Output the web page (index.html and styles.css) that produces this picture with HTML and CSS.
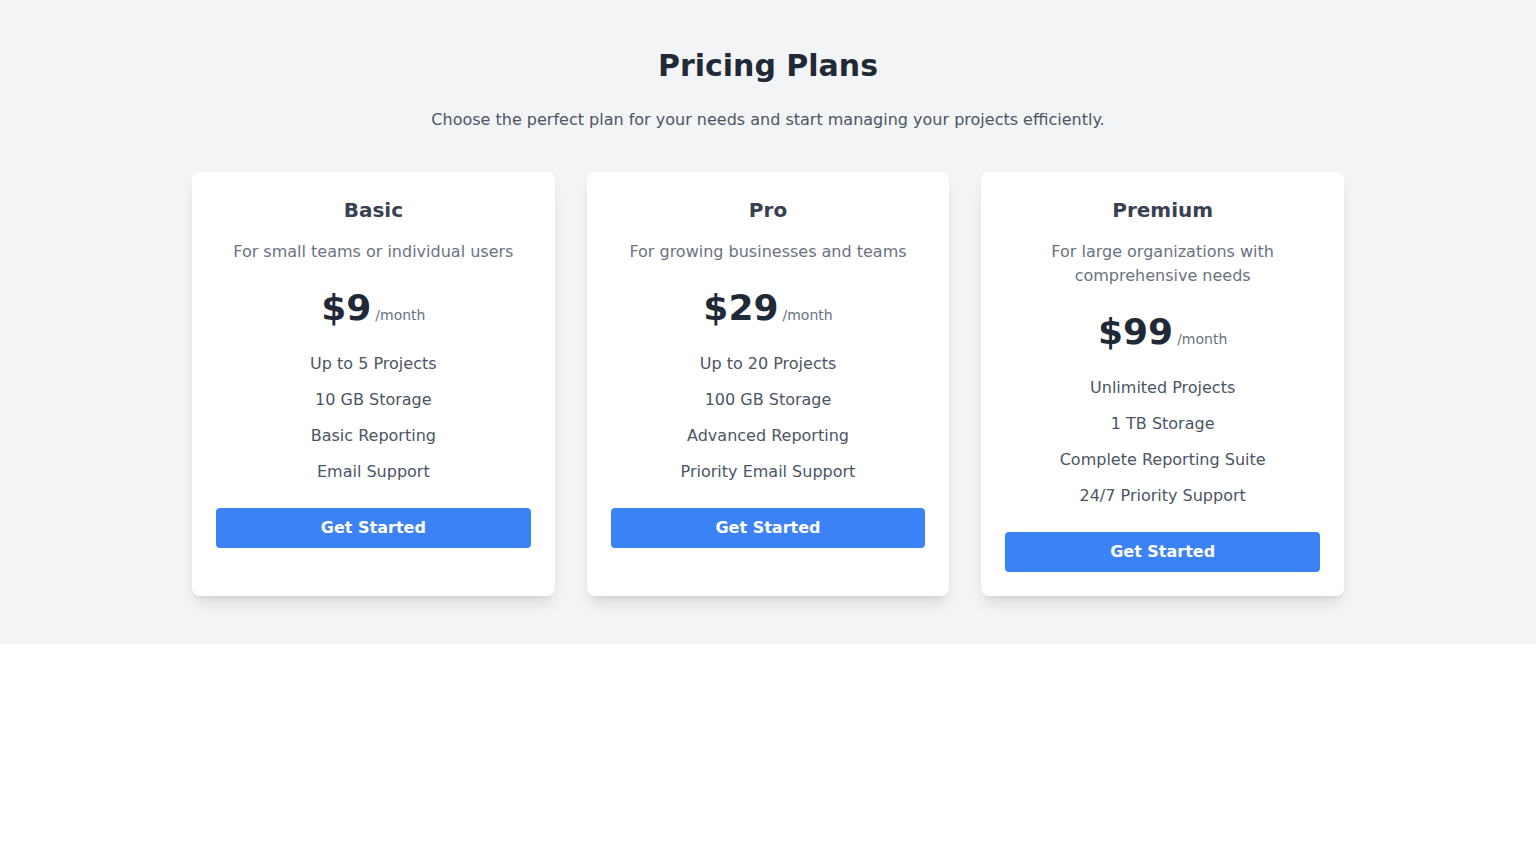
FILE: index.html
```html
<!DOCTYPE html>
<html lang="en">
<head>
<meta charset="utf-8">
<title>Pricing Plans</title>
<link rel="stylesheet" href="styles.css">
</head>
<body>
<section class="pricing">
  <div class="container">
    <h2 class="title">Pricing Plans</h2>
    <p class="subtitle">Choose the perfect plan for your needs and start managing your projects efficiently.</p>
    <div class="grid">
      <div class="card">
        <h3 class="plan-name">Basic</h3>
        <p class="plan-desc">For small teams or individual users</p>
        <div class="price"><span class="amount">$9</span><span class="period">/month</span></div>
        <ul class="features">
          <li>Up to 5 Projects</li>
          <li>10 GB Storage</li>
          <li>Basic Reporting</li>
          <li>Email Support</li>
        </ul>
        <button class="btn">Get Started</button>
      </div>
      <div class="card">
        <h3 class="plan-name">Pro</h3>
        <p class="plan-desc">For growing businesses and teams</p>
        <div class="price"><span class="amount">$29</span><span class="period">/month</span></div>
        <ul class="features">
          <li>Up to 20 Projects</li>
          <li>100 GB Storage</li>
          <li>Advanced Reporting</li>
          <li>Priority Email Support</li>
        </ul>
        <button class="btn">Get Started</button>
      </div>
      <div class="card">
        <h3 class="plan-name">Premium</h3>
        <p class="plan-desc">For large organizations with comprehensive needs</p>
        <div class="price"><span class="amount">$99</span><span class="period">/month</span></div>
        <ul class="features">
          <li>Unlimited Projects</li>
          <li>1 TB Storage</li>
          <li>Complete Reporting Suite</li>
          <li>24/7 Priority Support</li>
        </ul>
        <button class="btn">Get Started</button>
      </div>
    </div>
  </div>
</section>
</body>
</html>
```
FILE: styles.css
```css
* { box-sizing: border-box; }
html, body { margin: 0; padding: 0; }
body {
  font-family: "DejaVu Sans", sans-serif;
  background: #ffffff;
  color: #1f2937;
}
.pricing {
  background: #f3f4f6;
  padding: 48px 0;
}
.container {
  max-width: 1152px;
  margin: 0 auto;
  text-align: center;
}
.title {
  margin: 0 0 24px;
  font-size: 30px;
  line-height: 36px;
  font-weight: 700;
  color: #1f2937;
}
.subtitle {
  margin: 0 0 40px;
  font-size: 16px;
  line-height: 24px;
  color: #4b5563;
}
.grid {
  display: grid;
  grid-template-columns: repeat(3, 1fr);
  gap: 32px;
}
.card {
  background: #ffffff;
  border-radius: 8px;
  padding: 24px;
  box-shadow: 0 10px 15px -3px rgba(0,0,0,0.1), 0 4px 6px -4px rgba(0,0,0,0.1);
}
.plan-name {
  margin: 0 0 16px;
  font-size: 20px;
  line-height: 28px;
  font-weight: 700;
  color: #374151;
}
.plan-desc {
  margin: 0 0 24px;
  font-size: 16px;
  line-height: 24px;
  color: #6b7280;
}
.price {
  margin: 0 0 24px;
  display: flex;
  justify-content: center;
  align-items: baseline;
}
.amount {
  font-size: 36px;
  line-height: 40px;
  font-weight: 700;
  color: #1f2937;
}
.period {
  margin-left: 4px;
  font-size: 14px;
  line-height: 20px;
  color: #6b7280;
}
.features {
  list-style: none;
  margin: 0 0 24px;
  padding: 0;
  display: flex;
  flex-direction: column;
  gap: 12px;
}
.features li {
  font-size: 16px;
  line-height: 24px;
  color: #4b5563;
}
.btn {
  display: block;
  width: 100%;
  border: 0;
  border-radius: 4px;
  background: #3b82f6;
  color: #ffffff;
  font-family: inherit;
  font-size: 16px;
  line-height: 24px;
  font-weight: 700;
  padding: 8px 16px;
  cursor: pointer;
}
```
